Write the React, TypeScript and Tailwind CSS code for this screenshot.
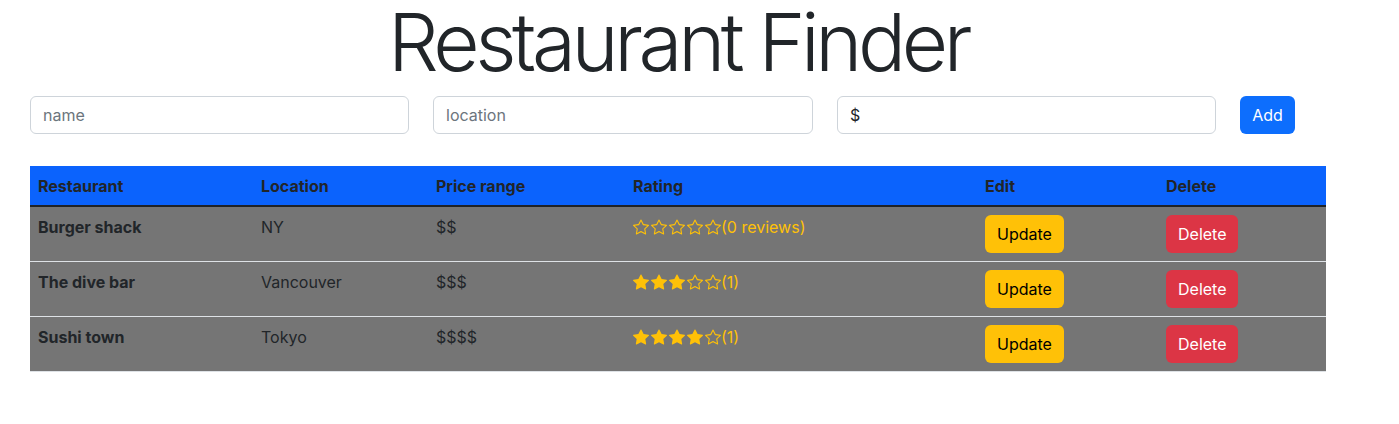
import React from "react";
import { BsStar, BsStarFill } from "react-icons/bs";

type R = { name: string; location: string; price: string; rating: number; label: string };

const rows: R[] = [
  { name: "Burger shack", location: "NY", price: "$$", rating: 0, label: "(0 reviews)" },
  { name: "The dive bar", location: "Vancouver", price: "$$$", rating: 3, label: "(1)" },
  { name: "Sushi town", location: "Tokyo", price: "$$$$", rating: 4, label: "(1)" },
];

function Stars({ n }: { n: number }) {
  return (
    <span className="inline-flex items-center gap-[2px]">
      {[0, 1, 2, 3, 4].map((i) =>
        i < n ? <BsStarFill key={i} size={16} /> : <BsStar key={i} size={16} />
      )}
    </span>
  );
}

export default function App() {
  return (
    <div className="min-h-[424px] bg-white text-[#212529] font-['Inter','Liberation_Sans',sans-serif]">
      <div className="ml-[30px] w-[1296px]">
        <h1 className="pt-[2px] pb-[4px] text-center text-[80px] leading-[80px] font-light tracking-[-4.4px] text-[#212529]">
          Restaurant Finder
        </h1>
        <div className="mt-[10px] flex items-center gap-6 w-[1265px]">
          <input
            className="w-[379px] h-[38px] border border-[#ced4da] rounded-[6px] px-3 text-base text-[#212529] placeholder:text-[#6c757d] outline-none"
            placeholder="name"
          />
          <input
            className="w-[380px] h-[38px] border border-[#ced4da] rounded-[6px] px-3 text-base text-[#212529] placeholder:text-[#6c757d] outline-none"
            placeholder="location"
          />
          <div className="w-[379px] h-[38px] border border-[#ced4da] rounded-[6px] px-3 flex items-center text-base text-[#212529]">
            $
          </div>
          <button className="w-[55px] h-[38px] rounded-[6px] bg-[#0d6efd] text-white text-base">Add</button>
        </div>
        <table className="mt-[32px] w-[1296px] border-collapse text-base">
          <thead>
            <tr className="bg-[#0b63fd] border-b-2 border-[#1f2328] h-[40px] text-left">
              <th className="w-[223px] px-2 font-bold">Restaurant</th>
              <th className="w-[175px] px-2 font-bold">Location</th>
              <th className="w-[197px] px-2 font-bold">Price range</th>
              <th className="w-[352px] px-2 font-bold">Rating</th>
              <th className="w-[181px] px-2 font-bold">Edit</th>
              <th className="w-[168px] px-2 font-bold">Delete</th>
            </tr>
          </thead>
          <tbody>
            {rows.map((r, i) => (
              <tr key={i} className="bg-[#757575] border-b border-[#dee2e6] h-[55px]">
                <td className="px-2 pt-2 pb-2 align-top leading-6 font-bold">{r.name}</td>
                <td className="px-2 pt-2 pb-2 align-top leading-6">{r.location}</td>
                <td className="px-2 pt-2 pb-2 align-top leading-6">{r.price}</td>
                <td className="px-2 pt-2 pb-2 align-top leading-6 text-[#ffc107]">
                  <span className="inline-flex items-center">
                    <Stars n={r.rating} />
                    <span>{r.label}</span>
                  </span>
                </td>
                <td className="px-2 pt-2 pb-2 align-top">
                  <button className="h-[38px] px-3 rounded-[6px] bg-[#ffc107] text-black text-base">Update</button>
                </td>
                <td className="px-2 pt-2 pb-2 align-top">
                  <button className="h-[38px] px-3 rounded-[6px] bg-[#dc3545] text-white text-base">Delete</button>
                </td>
              </tr>
            ))}
          </tbody>
        </table>
      </div>
    </div>
  );
}
